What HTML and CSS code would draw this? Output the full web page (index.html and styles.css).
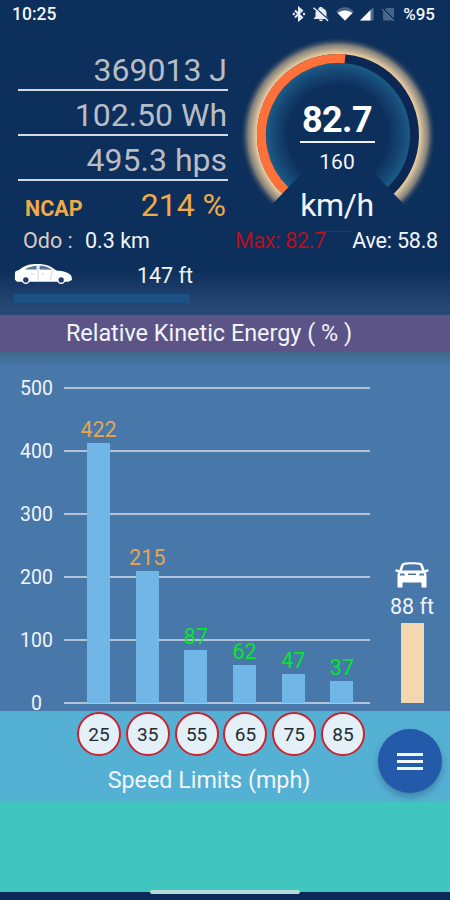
FILE: index.html
```
<!DOCTYPE html>
<html lang="en">

<head>
  <meta charset="UTF-8">
  <meta name="viewport" content="width=device-width, initial-scale=1.0">
  <title>Kinetic Energy</title>
  <link rel="stylesheet" href="styles.css">
</head>

<body>
  <div class="app">
    <header class="status-bar">
      <span class="clock">10:25</span>
      <div class="status-icons">
        <svg width="14" height="16" viewBox="0 0 14 16">
          <path d="M3 4.500l7 7L7 14V2l3 2.500-7 7" fill="none" stroke="#e8eef6" stroke-width="2" />
          <circle cx="1.800" cy="8" r="1.200" fill="#e8eef6" />
          <circle cx="12" cy="8" r="1.200" fill="#e8eef6" />
        </svg>
        <svg width="18" height="16" viewBox="0 0 18 16">
          <path d="M1.500 13l2-2.500V7c0-2.600 1.700-4.300 3.800-4.800V1h3v1.200C13 2.700 14.500 4.600 14.500 7v3.500l2 2.500zM7 13.500h4c0 2.300-4 2.300-4 0z" fill="#e8eef6" />
          <path d="M3.500 2l14 12.500" stroke="#0d2f5b" stroke-width="1.300" />
          <path d="M1.500 1.800l14.500 13" stroke="#e8eef6" stroke-width="1.500" />
        </svg>
        <svg width="18" height="16" viewBox="0 0 18 16">
          <path d="M0 5.500C5-.2 13-.2 18 5.500L9 15z" fill="#48648a" />
          <path d="M1.500 7C5.500 3.600 12.500 3.600 16.500 7L9 14.500z" fill="#fff" />
        </svg>
        <svg class="signal" width="14" height="16" viewBox="0 0 14 16">
          <path d="M0 14.500L13.500 1v13.500z" fill="#526d92" />
          <path d="M0 14.500L10.500 4v10.500z" fill="#fff" />
        </svg>
        <svg width="13" height="16" viewBox="0 0 13 16">
          <path d="M4.500 2H12v12.500H1V5.500z" fill="#48648a" />
          <path d="M1 3l11 11" stroke="#0d2f5b" stroke-width="2" />
          <path d="M0 3l12 12" stroke="#6d84a3" stroke-width="1" />
        </svg>
        <span class="battery">%95</span>
      </div>
    </header>

    <main>
      <section class="dashboard">
        <div class="readings">
          <div class="reading">369013 J</div>
          <div class="reading">102.50 Wh</div>
          <div class="reading">495.3 hps</div>
          <div class="ncap"><b>NCAP</b><span>214 %</span></div>
        </div>

        <div class="gauge">
          <svg class="gauge-ring" width="206" height="206" viewBox="-103 -103 206 206">
            <defs>
              <radialGradient id="glow" gradientUnits="userSpaceOnUse" cx="0" cy="0" r="98">
                <stop offset="0.820" stop-color="#f4d5a9" />
                <stop offset="0.860" stop-color="#c6b394" />
                <stop offset="0.920" stop-color="#807f7b" />
                <stop offset="1" stop-color="#0d2f5b" stop-opacity="0" />
              </radialGradient>
              <radialGradient id="inner" gradientUnits="userSpaceOnUse" cx="0" cy="0" r="73">
                <stop offset="0.680" stop-color="#0d2f5b" />
                <stop offset="0.860" stop-color="#164674" />
                <stop offset="1" stop-color="#1b5e8a" />
              </radialGradient>
            </defs>
            <path d="M-61.300 64.600A89 89 0 1 1 61.300 64.600" fill="none" stroke="url(#glow)" stroke-width="18" />
            <path d="M-42.700 45A62 62 0 1 1 42.700 45" fill="none" stroke="url(#inner)" stroke-width="22" />
            <path d="M-52.700 55.500A76.500 76.500 0 1 1 52.700 55.500" fill="none" stroke="#0c2754" stroke-width="9" />
            <path d="M-52.700 55.500A76.500 76.500 0 0 1 7 -76.200" fill="none" stroke="#ff7138" stroke-width="9" />
            <path d="M-20 96.500H16" stroke="#153f66" />
          </svg>
          <div class="gauge-text">
            <div class="speed">82.7</div>
            <div class="limit">160</div>
            <div class="unit">km/h</div>
          </div>
        </div>
      </section>

      <section class="trip">
        <div class="odo"><span>Odo :</span>0.3 km</div>
        <div class="max">Max: 82.7</div>
        <div class="ave">Ave: 58.8</div>
      </section>

      <section class="distance">
        <div class="distance-row">
          <svg width="59" height="22" viewBox="0 0 60 22">
            <path d="M1 10C1 8 3 7.500 5 7C10 3 14 1 21 .8C32 .2 38 3 43 7.500C50 8 57 9.500 58.500 13.500L59 17L55 19H3L.8 16.500z" fill="#fff" />
            <path d="M11 6.500C14 4 18 2.800 23 2.500V6.500zM26 2.500C32 2.300 35 4 39 6.800L26 6.500z" fill="#5b7299" />
            <path d="M24.500 2v16M28 11h3M17 11h3M40 7.500c-2 2-2 5-3 10" fill="none" stroke="#b4c0d2" stroke-width=".7" />
            <circle cx="12" cy="17" r="4.200" fill="#fff" />
            <circle cx="12" cy="17" r="2.700" fill="#1d3b68" />
            <circle cx="48" cy="17" r="4.200" fill="#fff" />
            <circle cx="48" cy="17" r="2.700" fill="#1d3b68" />
          </svg>
          <span>147 ft</span>
        </div>
        <div class="distance-bar"></div>
      </section>

      <h1 class="title">Relative Kinetic Energy ( % )</h1>

      <section class="chart">
        <div class="scale">
          <span>500</span><span>400</span><span>300</span><span>200</span><span>100</span><span>0</span>
        </div>
        <div class="plot">
          <div class="column"><span class="over">422</span><div class="bar" style="height: 260px"></div></div>
          <div class="column"><span class="over">215</span><div class="bar" style="height: 132px"></div></div>
          <div class="column"><span>87</span><div class="bar" style="height: 53px"></div></div>
          <div class="column"><span>62</span><div class="bar" style="height: 38px"></div></div>
          <div class="column"><span>47</span><div class="bar" style="height: 29px"></div></div>
          <div class="column"><span>37</span><div class="bar" style="height: 22px"></div></div>
        </div>
        <div class="stopping">
          <svg width="34" height="26" viewBox="0 0 34 26">
            <path fill-rule="evenodd" d="M8 1C10 0 24 0 26 1C28 2 28.500 5 29.500 8L33.500 7.300V9.500L30.500 10.500C32 12 31.500 15 31.500 18V25.500H26.500V20.500H7.500V25.500H2.500V18C2.500 15 2 12 3.500 10.500L.5 9.500V7.300L4.500 8C5.500 5 6 2 8 1zM9 3L7 8.500H27L25 3C22 2 12 2 9 3zM5 11.500V13.500H10L9 11.500zM13 11.500V13H21V11.500zM25 11.500L24 13.500H29V11.500z" fill="#fff" />
          </svg>
          <span>88 ft</span>
          <div class="stopping-bar"></div>
        </div>
      </section>

      <section class="limits">
        <div class="signs">
          <span>25</span><span>35</span><span>55</span><span>65</span><span>75</span><span>85</span>
        </div>
        <div class="limits-label">Speed Limits (mph)</div>
        <button class="menu" aria-label="Menu"><i></i><i></i><i></i></button>
      </section>
    </main>

    <footer><div class="home-bar"></div></footer>
  </div>
</body>

</html>
```
FILE: styles.css
```
* {
  margin: 0;
  padding: 0;
  box-sizing: border-box;
}

body {
  font-family: Roboto, "Liberation Sans", sans-serif;
  background-color: #0d2f5b;
  color: #f1f5fb;
}

.app {
  display: flex;
  flex-direction: column;
  width: 450px;
  height: 900px;
  overflow: hidden;
  background: linear-gradient(to bottom, #0d2f5b 270px, #284775 308px);
}

.status-bar {
  display: flex;
  justify-content: space-between;
  align-items: center;
  height: 28px;
  padding: 0 15px 1px 12px;
  font-size: 17.5px;
  font-weight: 500;
}

.status-icons {
  display: flex;
  align-items: center;
}

.status-icons svg {
  margin-right: 6px;
}

.status-icons .signal {
  margin-right: 8px;
}

.status-icons .battery {
  margin-left: 2px;
  font-size: 17px;
}

main {
  flex: 1;
  display: flex;
  flex-direction: column;
}

.dashboard {
  display: flex;
  height: 198px;
}

.readings {
  width: 228px;
  padding: 18px 0 0 18px;
}

.reading {
  height: 45px;
  padding: 4px 1px 0 0;
  border-bottom: 2px solid #d3d9e4;
  color: #b9bdc6;
  font-size: 32px;
  line-height: 40px;
  text-align: right;
}

.ncap {
  display: flex;
  justify-content: space-between;
  align-items: baseline;
  padding: 4px 2px 0 7px;
  color: #f0aa49;
  font-size: 32px;
  line-height: 40px;
}

.ncap b {
  font-size: 21.5px;
}

.gauge {
  position: relative;
  width: 222px;
}

.gauge-ring {
  position: absolute;
  top: 4px;
  left: 7px;
}

.gauge-text {
  position: relative;
  display: flex;
  flex-direction: column;
  align-items: center;
  padding: 70px 4px 0 0;
}

.speed {
  width: 75px;
  height: 45px;
  border-bottom: 2px solid #eef1fa;
  color: #fff;
  font-size: 36px;
  font-weight: 700;
  letter-spacing: -0.6px;
  line-height: 44px;
  text-align: center;
}

.limit {
  margin-top: 6px;
  font-size: 21px;
  line-height: 26px;
}

.unit {
  margin-top: 10px;
  font-size: 32px;
  letter-spacing: -0.4px;
  line-height: 40px;
}

.trip {
  display: flex;
  height: 29px;
  padding: 1px 12px 0 23px;
  font-size: 21.5px;
  line-height: 28px;
}

.odo {
  width: 212px;
}

.odo span {
  display: inline-block;
  width: 62px;
  color: #d9ccc2;
}

.max {
  color: #b4101f;
  letter-spacing: -0.3px;
}

.ave {
  margin-left: auto;
  letter-spacing: -0.2px;
}

.distance {
  height: 60px;
  padding: 8px 0 0 14px;
}

.distance-row {
  display: flex;
  justify-content: space-between;
  width: 179px;
  height: 31px;
  font-size: 21.5px;
  line-height: 25px;
}

.distance-bar {
  width: 176px;
  height: 9px;
  background-color: #1c5183;
}

.title {
  height: 36px;
  padding-right: 32px;
  background-color: #5c5486;
  font-size: 23.4px;
  font-weight: 400;
  line-height: 36px;
  text-align: center;
}

.chart {
  display: flex;
  height: 360px;
  background: linear-gradient(to bottom, #3d6687, #4878aa 16px);
}

.scale {
  display: flex;
  flex-direction: column;
  width: 64px;
  padding: 6px 0 0 9px;
  font-size: 19.5px;
  line-height: 63px;
  text-align: center;
}

.plot {
  display: flex;
  align-items: flex-end;
  gap: 25.7px;
  width: 306px;
  height: 317px;
  margin-top: 36px;
  padding: 0 0 1px 23px;
  background: repeating-linear-gradient(to bottom, #b2c2d9 0, #b2c2d9 2px, transparent 2px, transparent 63px);
}

.column {
  display: flex;
  flex-direction: column;
  align-items: center;
  width: 23px;
  color: #05e52a;
  font-size: 21.5px;
  line-height: 26px;
}

.column .over {
  color: #e5a650;
}

.bar {
  width: 23px;
  background-color: #70b7e7;
}

.stopping {
  display: flex;
  flex-direction: column;
  align-items: center;
  width: 80px;
  padding: 211px 0 0 4px;
  font-size: 21.5px;
  line-height: 26px;
}

.stopping span {
  margin-top: 6px;
}

.stopping-bar {
  width: 23px;
  height: 80px;
  margin-top: 3px;
  background-color: #f4d6b0;
}

.limits {
  position: relative;
  height: 91px;
  background-color: #55b1d4;
}

.signs {
  display: flex;
  gap: 4.8px;
  padding: 1px 0 0 77px;
}

.signs span {
  width: 44px;
  height: 44px;
  border: 2px solid #cb2230;
  border-radius: 50%;
  background-color: #e4f0f7;
  color: #202b32;
  font-size: 19px;
  line-height: 42px;
  text-align: center;
}

.limits-label {
  margin-top: 10px;
  padding-right: 32px;
  font-size: 23.3px;
  line-height: 28px;
  text-align: center;
}

.menu {
  position: absolute;
  top: 18px;
  left: 378px;
  display: flex;
  flex-direction: column;
  justify-content: center;
  align-items: center;
  gap: 4px;
  width: 64px;
  height: 64px;
  border: none;
  border-radius: 50%;
  background-color: #235aaa;
  box-shadow: 0 4px 7px rgba(20, 50, 80, 0.35);
}

.menu i {
  width: 26px;
  height: 3px;
  background-color: #f1f6ff;
}

footer {
  height: 98px;
  padding-top: 88px;
  background: linear-gradient(to bottom, #40c6bf 90px, #0b2959 90px);
}

.home-bar {
  width: 150px;
  height: 4px;
  margin: 0 auto;
  border-radius: 2px;
  background-color: #b6dad8;
}
```
